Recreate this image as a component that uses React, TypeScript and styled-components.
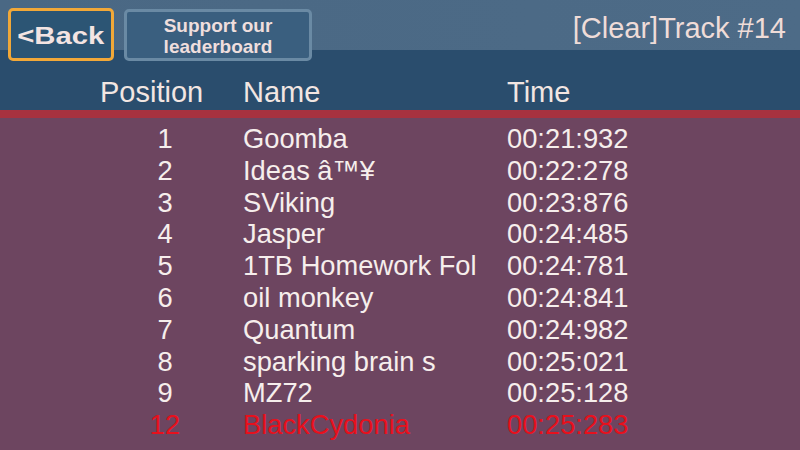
import React from 'react'
import styled, { createGlobalStyle } from 'styled-components'

const GlobalStyle = createGlobalStyle`
  html, body {
    margin: 0;
    padding: 0;
    background: #6d4560;
  }
  body {
    font-family: "Liberation Sans", Arial, sans-serif;
  }
`

const Screen = styled.div`
  width: 800px;
  height: 450px;
  overflow: hidden;
  background: #6d4560;
  display: flex;
  flex-direction: column;
`

const TopBar = styled.div`
  height: 50px;
  box-sizing: border-box;
  background: linear-gradient(90deg, #4a6884, #4d6b87);
  display: flex;
  align-items: flex-start;
  padding: 8px 14px 0 8px;
  gap: 10px;
`

const BackButton = styled.button`
  width: 106px;
  height: 53px;
  box-sizing: border-box;
  border: 3px solid #f2a838;
  border-radius: 5px;
  background: #2c5574;
  color: #f3e4e2;
  font-family: "Liberation Sans", Arial, sans-serif;
  font-weight: 700;
  font-size: 24px;
  padding: 2px 0 0;
  cursor: pointer;
  position: relative;
  z-index: 1;
`

const Wide = styled.span`
  display: inline-block;
  transform: scaleX(1.22);
`

const SupportButton = styled.button`
  width: 188px;
  height: 52px;
  margin-top: 1px;
  box-sizing: border-box;
  border: 3px solid #6a8aa4;
  border-radius: 5px;
  background: #3a5f7f;
  color: #efdedd;
  font-family: "Liberation Sans", Arial, sans-serif;
  font-weight: 700;
  font-size: 19px;
  line-height: 21px;
  padding: 1px 0 0;
  cursor: pointer;
  position: relative;
  z-index: 1;
`

const Title = styled.div`
  margin-left: auto;
  color: #efdcd8;
  font-size: 29px;
  line-height: 40px;
`

const HeaderBand = styled.div`
  height: 60px;
  box-sizing: border-box;
  background: #2a4d6d;
  padding-top: 26px;
`

const RedLine = styled.div`
  height: 8px;
  background: #a7323f;
`

const Grid = styled.div`
  display: grid;
  grid-template-columns: 130px 251px 1fr;
  column-gap: 13px;
  margin-left: 100px;
`

const HeadCell = styled.div`
  color: #f2e6e2;
  font-size: 29px;
  line-height: 32px;
`

const Rows = styled.div`
  padding-top: 5px;
`

const Cell = styled.div<{ $center?: boolean; $mine?: boolean }>`
  color: ${p => (p.$mine ? '#e8101c' : '#f6eeec')};
  font-size: 27.3px;
  line-height: 31.8px;
  white-space: nowrap;
  overflow: hidden;
  text-align: ${p => (p.$center ? 'center' : 'left')};
`

type Entry = {
  pos: number
  name: string
  time: string
  mine?: boolean
}

const entries: Entry[] = [
  { pos: 1, name: 'Goomba', time: '00:21:932' },
  { pos: 2, name: 'Ideas â™¥', time: '00:22:278' },
  { pos: 3, name: 'SViking', time: '00:23:876' },
  { pos: 4, name: 'Jasper', time: '00:24:485' },
  { pos: 5, name: '1TB Homework Fol', time: '00:24:781' },
  { pos: 6, name: 'oil monkey', time: '00:24:841' },
  { pos: 7, name: 'Quantum', time: '00:24:982' },
  { pos: 8, name: 'sparking brain s', time: '00:25:021' },
  { pos: 9, name: 'MZ72', time: '00:25:128' },
  { pos: 12, name: 'BlackCydonia', time: '00:25:283', mine: true },
]

const App: React.FC = () => {
  return (
    <Screen>
      <GlobalStyle />
      <TopBar>
        <BackButton>
          <Wide>&lt;Back</Wide>
        </BackButton>
        <SupportButton>
          Support our
          <br />
          leaderboard
        </SupportButton>
        <Title>[Clear]Track #14</Title>
      </TopBar>
      <HeaderBand>
        <Grid>
          <HeadCell>Position</HeadCell>
          <HeadCell>Name</HeadCell>
          <HeadCell>Time</HeadCell>
        </Grid>
      </HeaderBand>
      <RedLine />
      <Rows>
        <Grid>
          {entries.map(e => (
            <React.Fragment key={e.pos}>
              <Cell $center $mine={e.mine}>{e.pos}</Cell>
              <Cell $mine={e.mine}>{e.name}</Cell>
              <Cell $mine={e.mine}>{e.time}</Cell>
            </React.Fragment>
          ))}
        </Grid>
      </Rows>
    </Screen>
  )
}

export default App
